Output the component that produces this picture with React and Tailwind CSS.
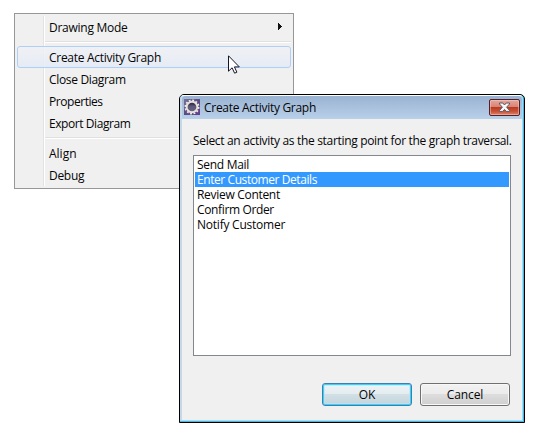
const menuItems = [
  { label: 'Drawing Mode', submenu: true, tracking: 'tracking-[-0.26px]' },
  null,
  { label: 'Create Activity Graph', active: true, tracking: 'tracking-[-0.29px]' },
  { label: 'Close Diagram', tracking: 'tracking-[-0.33px]' },
  { label: 'Properties', tracking: 'tracking-[-0.45px]' },
  { label: 'Export Diagram', tracking: 'tracking-[-0.43px]' },
  null,
  { label: 'Align', tracking: 'tracking-[0px]' },
  { label: 'Debug', tracking: 'tracking-[-0.3px]' },
];

const activities = [
  { label: 'Send Mail', tracking: 'tracking-[-0.3px]' },
  { label: 'Enter Customer Details', selected: true, tracking: 'tracking-[-0.42px]' },
  { label: 'Review Content', tracking: 'tracking-[-0.3px]' },
  { label: 'Confirm Order', tracking: 'tracking-[-0.36px]' },
  { label: 'Notify Customer', tracking: 'tracking-[-0.23px]' },
];

function Separator() {
  return (
    <div className="flex h-2 items-center pl-[28px]">
      <div className="h-0.5 flex-1 border-t border-[#e0e0e0] bg-white" />
    </div>
  );
}

function MenuItem({ item }) {
  return (
    <div
      className={`flex h-[22px] items-start justify-between rounded-[3px] border pr-2 pl-[31px] ${
        item.active ? 'border-[#aecff7] bg-linear-to-b from-[#f0f1f5]/80 to-[#e3eaf6]/80' : 'border-transparent'
      }`}
    >
      <span className={`pt-px leading-[19px] ${item.tracking}`}>{item.label}</span>
      {item.submenu && (
        <svg className="mt-1.5" width="4" height="7" viewBox="0 0 4 7" shapeRendering="crispEdges">
          <path d="M0 0h1v1h1v1h1v1h1v1H3v1H2v1H1v1H0z" fill="#111" />
        </svg>
      )}
    </div>
  );
}

function ContextMenu() {
  return (
    <div className="absolute top-[13px] left-[14px] w-[280px] border border-[#979797] bg-[#f0f0f0] p-0.5">
      <div className="absolute top-0.5 bottom-0.5 left-[28px] w-0.5 border-l border-[#e2e3e3] bg-white" />
      <div className="relative">
        {menuItems.map((item, i) => (item ? <MenuItem key={i} item={item} /> : <Separator key={i} />))}
      </div>
    </div>
  );
}

function EclipseIcon() {
  return (
    <svg width="16" height="16" viewBox="0 0 16 16">
      <defs>
        <linearGradient id="tile" x1="0" y1="0" x2="1" y2="1">
          <stop offset="0" stopColor="#77709b" />
          <stop offset="0.5" stopColor="#5b4b83" />
          <stop offset="1" stopColor="#63408c" />
        </linearGradient>
        <linearGradient id="core" x1="0" y1="0" x2="0" y2="1">
          <stop offset="0" stopColor="#2c2545" />
          <stop offset="1" stopColor="#746e92" />
        </linearGradient>
      </defs>
      <rect width="16" height="16" fill="url(#tile)" />
      <circle cx="8" cy="8" r="6.7" fill="none" stroke="#f1eee6" strokeWidth="1.6" strokeDasharray="1.9 1.608" />
      <circle cx="8" cy="8" r="5.3" fill="url(#core)" stroke="#e6e3da" strokeWidth="1.9" />
      <path d="M4 7.2h8M3.8 9h8.4" stroke="#817b9d" strokeWidth="0.5" />
    </svg>
  );
}

function CloseButton() {
  return (
    <div className="flex h-[17px] w-[31px] items-center justify-center rounded-[2px] border border-[#51202a] bg-[linear-gradient(to_bottom,#e5a69c_0%,#d98274_46%,#bd3a20_50%,#c65236_75%,#dc826c_100%)] shadow-[inset_0_0_0_1px_rgba(255,205,195,0.5)]">
      <svg width="13" height="11" viewBox="0 0 13 11">
        <path
          d="M1.5 1h3.3l1.7 2 1.7-2h3.3v1L8.6 5.2l2.9 3.2v1H8.2l-1.7-2-1.7 2H1.5v-1l2.9-3.2L1.5 2z"
          fill="#f7f7f7"
          stroke="#5c5965"
        />
      </svg>
    </div>
  );
}

function Dialog() {
  return (
    <div className="absolute top-[94px] left-[179px] h-[329px] w-[346px] rounded-t-[5px] border border-black bg-[#35bfe9]">
      <div className="mr-px flex h-[326px] flex-col rounded-t-[4px] border-t border-r border-b border-l-2 border-t-white border-r-[#b9cfe5] border-b-[#c3d3e6] border-l-[#c6d7e9] bg-[#f0f0f0]">
        <div className="flex h-[23px] shrink-0 items-start justify-between rounded-t-[3px] bg-linear-to-b from-[#9ab3d1] to-[#b9d0ea] pt-[3px] pr-[2px] pl-0.5">
          <div className="flex items-start gap-1">
            <EclipseIcon />
            <span className="leading-[17px] tracking-[-0.29px]">Create Activity Graph</span>
          </div>
          <CloseButton />
        </div>
        <div className="flex flex-1 flex-col pr-[11px] pl-[11px]">
          <div className="mt-[13px] h-[23px] leading-[17px] tracking-[-0.32px] whitespace-nowrap">
            Select an activity as the starting point for the graph traversal.
          </div>
          <div className="h-[201px] border border-[#828790] bg-white p-px">
            {activities.map((a) => (
              <div
                key={a.label}
                className={`h-[15px] pl-0.5 leading-[15px] ${a.tracking} ${a.selected ? 'bg-[#3399ff] text-white' : ''}`}
              >
                {a.label}
              </div>
            ))}
          </div>
          <div className="mt-[27px] mr-px flex justify-end gap-2">
            <div className="flex h-[23px] w-[90px] items-center justify-center rounded-[3px] border border-[#3c7fb1] bg-[linear-gradient(to_bottom,#eef4f7_0%,#e3ecf0_48%,#d2dfe5_50%,#c3d4dc_100%)] shadow-[inset_0_0_0_1px_#3dd0f5,inset_0_0_0_2px_rgba(175,232,248,0.6)]">
              OK
            </div>
            <div className="flex h-[23px] w-[90px] items-center justify-center rounded-[3px] border border-[#707070] bg-[linear-gradient(to_bottom,#f2f2f2_0%,#ebebeb_48%,#dddddd_50%,#cfcfcf_100%)] tracking-[-0.1px] shadow-[inset_0_0_0_1px_#f8f8f8]">
              Cancel
            </div>
          </div>
        </div>
      </div>
    </div>
  );
}

function Cursor() {
  return (
    <svg className="absolute top-[55px] left-[228px]" width="13" height="20" viewBox="0 0 13 20">
      <path
        d="M.5 .8v15.4l3.6-3.4 2.5 5.4 2.3-1-2.5-5.3h4.9z"
        fill="white"
        stroke="#15152b"
        strokeLinejoin="miter"
      />
    </svg>
  );
}

export default function App() {
  return (
    <div className="relative h-[435px] w-[537px] overflow-hidden bg-white font-['Open_Sans','Noto_Sans',sans-serif] text-[12px] text-[#050505]">
      <ContextMenu />
      <Dialog />
      <Cursor />
    </div>
  );
}
